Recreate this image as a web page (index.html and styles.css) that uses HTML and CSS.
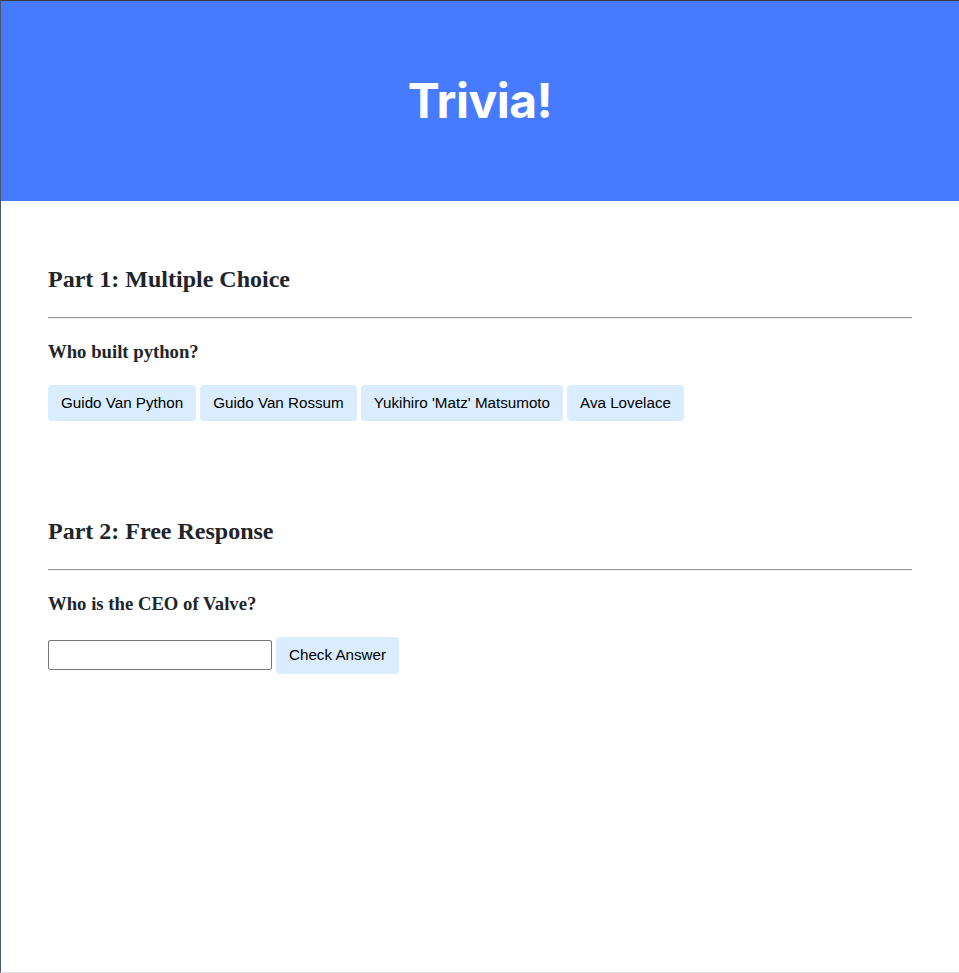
FILE: index.html
```html
<!DOCTYPE html>
<html lang="en">
<head>
<meta charset="utf-8">
<title>Trivia!</title>
<link rel="stylesheet" href="styles.css">
</head>
<body>
<div class="frame">
  <div class="header">
    <h1>Trivia!</h1>
  </div>
  <div class="container">
    <div class="section">
      <h2>Part 1: Multiple Choice</h2>
      <hr>
      <h3>Who built python?</h3>
      <div class="choices">
        <button class="btn">Guido Van Python</button>
        <button class="btn">Guido Van Rossum</button>
        <button class="btn">Yukihiro 'Matz' Matsumoto</button>
        <button class="btn">Ava Lovelace</button>
      </div>
      <p class="feedback"></p>
    </div>
    <div class="section">
      <h2>Part 2: Free Response</h2>
      <hr>
      <h3>Who is the CEO of Valve?</h3>
      <form class="free">
        <input type="text" class="answer">
        <button type="button" class="btn">Check Answer</button>
      </form>
    </div>
  </div>
</div>
</body>
</html>
```
FILE: styles.css
```css
html, body {
  margin: 0;
  padding: 0;
}
body {
  background-color: #fff;
  color: #212529;
  font-family: "Liberation Serif", "Times New Roman", serif;
  font-size: 16px;
  font-weight: 400;
  line-height: 1.5;
  text-align: left;
}
.frame {
  box-sizing: border-box;
  min-height: 973px;
  border-top: 1px solid #3a3a3a;
  border-left: 1px solid #45596a;
  border-bottom: 1px solid #dcdcdc;
}
.header {
  background-color: #477bff;
  color: #fff;
  margin-bottom: 32px;
  padding: 32px 16px;
  text-align: center;
}
.header h1 {
  font-family: "Inter", "Open Sans", sans-serif;
  font-weight: 700;
  font-size: 48px;
  margin: 32px 0;
  letter-spacing: -0.5px;
}
.container {
  padding-left: 15px;
  padding-right: 15px;
}
.section {
  padding: 8px 32px 16px 32px;
}
.section h2 {
  font-size: 24px;
  margin: 20px 0;
}
.section h3 {
  font-size: 18.72px;
  margin: 18.72px 0;
}
.section hr {
  margin: 8px 0;
  border: 0;
  border-top: 1px solid #9a9a9a;
  border-bottom: 1px solid #eeeeee;
}
.feedback {
  height: 32px;
  margin: 16px 0 0;
}
.btn {
  background-color: #d9edff;
  border: 1px solid transparent;
  border-radius: 4px;
  color: #000;
  font-family: "Liberation Sans", Arial, sans-serif;
  font-size: 15.2px;
  font-weight: 400;
  line-height: 1.5;
  padding: 6px 12px;
  text-align: center;
  vertical-align: middle;
}
.free {
  margin: 0;
}
.answer {
  font-family: "Liberation Sans", Arial, sans-serif;
  font-size: 13.33px;
  line-height: 1.8;
  width: 25%;
  padding: 2px 3px;
  border: 1px solid #767676;
  border-radius: 2px;
  vertical-align: middle;
}
```
